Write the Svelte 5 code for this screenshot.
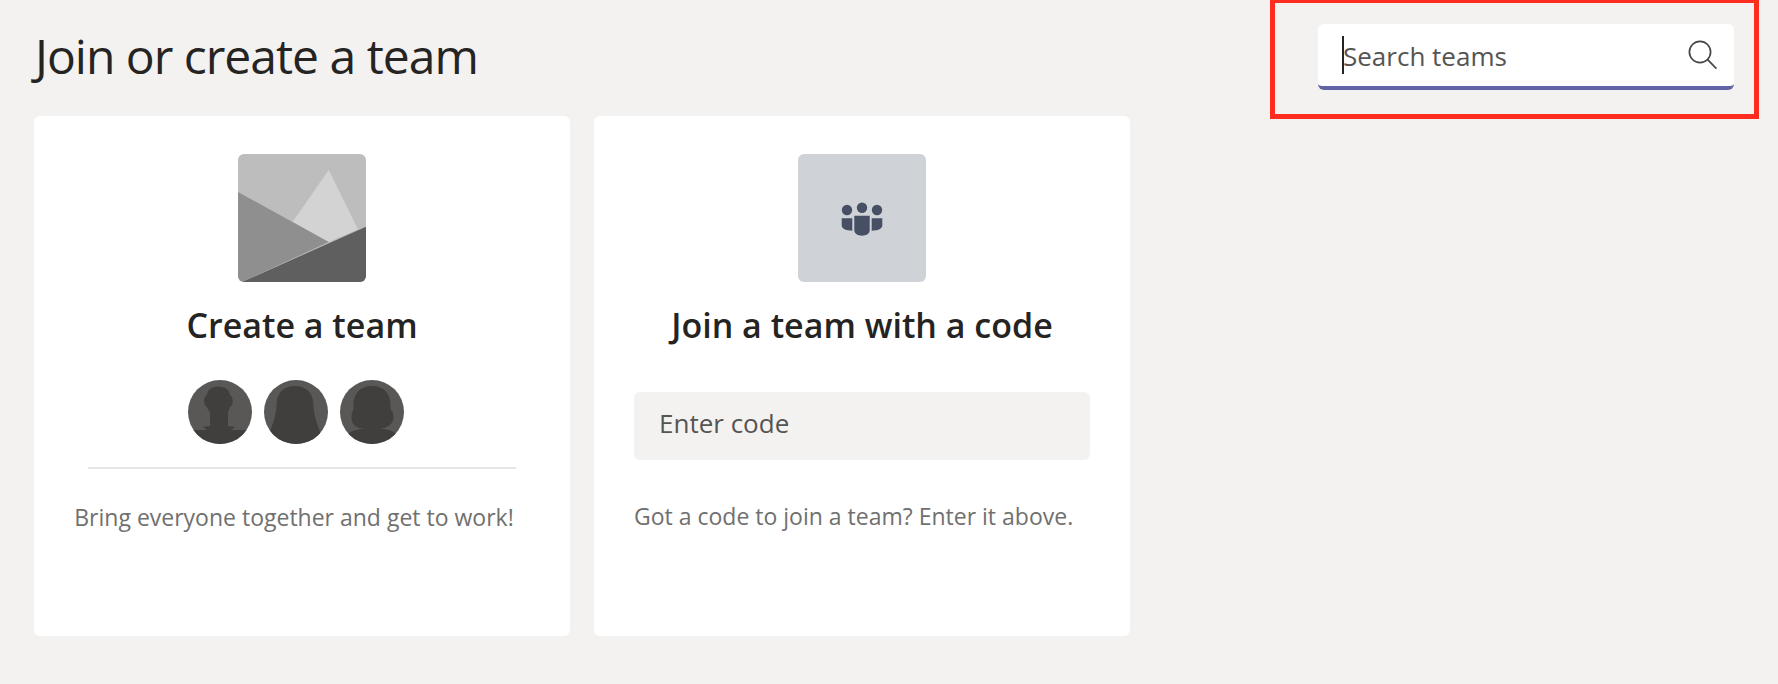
<script>
const cards = { create: "Create a team", join: "Join a team with a code" };
</script>

<div class="page">
  <header class="top">
    <h1>Join or create a team</h1>
    <div class="search-zone">
      <div class="search">
        <i class="caret"></i>
        <span class="placeholder">Search teams</span>
        <svg class="search-icon" width="30" height="32" viewBox="0 0 30 32" fill="none" stroke="#484644" stroke-width="1.7">
          <circle cx="12" cy="12" r="10.6" />
          <path d="M19.4 19.4 L28.4 28.6" />
        </svg>
      </div>
    </div>
  </header>

  <main class="cards">
    <section class="card">
      <svg class="tile" width="128" height="128" viewBox="0 0 128 128">
        <rect width="128" height="128" fill="#bdbdbd" />
        <path d="M90.7 16 L120 75.3 L90.7 88 L54.7 67.7 Z" fill="#d3d3d3" />
        <path d="M0 38 L90.7 88 L4 128 L0 128 Z" fill="#8f8f8f" />
        <path d="M128 72.7 L128 128 L4 128 Z" fill="#5f5f5f" />
      </svg>
      <h2>{cards.create}</h2>
      <div class="avatars">
        <svg width="64" height="64" viewBox="0 0 64 64">
          <rect width="64" height="64" fill="#595856" />
          <path d="M30.5 6.5 C37.5 6.5 41.5 10 42 15 C45.5 17 46 25 42 27 C41.5 29 40.5 31 40 32 L40 46 L47 47 L43 50 L64 50 L64 64 L0 64 L0 50 L19 50 L15 47 L22 46 L22 32 C21 31 19.5 29 19 27 C15 25 15 17 19 15 C19.5 10 23.5 6.5 30.5 6.5 Z" fill="#403f3d" />
        </svg>
        <svg width="64" height="64" viewBox="0 0 64 64">
          <rect width="64" height="64" fill="#595856" />
          <path d="M31 6 C42 6 49 13 49.3 23 C49.5 34 53 44 57 54 L57 64 L5 64 L5 54 C9 44 12.5 34 12.7 23 C13 13 20 6 31 6 Z" fill="#403f3d" />
        </svg>
        <svg width="64" height="64" viewBox="0 0 64 64">
          <rect width="64" height="64" fill="#595856" />
          <path d="M32 6 C44 6 50.5 14 50.5 24 C50.5 28 50.5 29 51 30 C54.5 33 54.5 41 50 45 C46.5 48 42 48.5 39 48.5 C46 49 52 50 56 54 L56 64 L8 64 L8 54 C12 50 19 49 25 48.5 C22 48.5 17 48 14 45 C10.5 41 11 33 13.5 30 C13.5 28 13.5 27 13.5 24 C13.5 14 20 6 32 6 Z" fill="#403f3d" />
        </svg>
      </div>
      <hr />
      <p class="hint shifted">Bring everyone together and get to work!</p>
    </section>

    <section class="card">
      <svg class="tile" width="128" height="128" viewBox="0 0 128 128">
        <rect width="128" height="128" fill="#cfd2d6" />
        <g fill="#464f63">
          <circle cx="49" cy="56" r="5.2" />
          <circle cx="64" cy="53.7" r="5.2" />
          <circle cx="79" cy="56" r="5.2" />
          <path d="M43.7 64.3 H54.3 V76.7 C48 76.7 43.7 75 43.7 71 Z" />
          <path d="M73.7 64.3 H84.3 V71 C84.3 75 80 76.7 73.7 76.7 Z" />
          <path d="M56.3 61.7 H71.7 V76 C71.7 80 68 81.7 64 81.7 C60 81.7 56.3 80 56.3 76 Z" />
        </g>
      </svg>
      <h2>{cards.join}</h2>
      <div class="code-input">Enter code</div>
      <p class="hint left">Got a code to join a team? Enter it above.</p>
    </section>
  </main>
</div>

<style>
:global(body) {
  margin: 0;
  background: #f3f2f1;
}

.page {
  height: 684px;
  font-family: "Open Sans", sans-serif;
  color: #252423;
  overflow: hidden;
}

.top {
  display: flex;
  justify-content: space-between;
  height: 119px;
  padding: 0 19px 0 35px;
  margin-bottom: -3px;
}

h1 {
  margin: 26px 0 0;
  font-size: 48px;
  line-height: 60px;
  font-weight: 400;
  letter-spacing: -1px;
}

.search-zone {
  box-sizing: border-box;
  width: 489px;
  height: 119px;
  border: solid #ff2d20;
  border-width: 3px 5px 5px;
  padding: 21px 20px 0 43px;
}

.search {
  box-sizing: border-box;
  display: flex;
  align-items: center;
  height: 66px;
  padding: 0 16px 0 24px;
  background: #fff;
  border-bottom: 4px solid #6264a7;
  border-radius: 6px;
}

.caret {
  width: 2px;
  height: 38px;
  margin-right: -1px;
  background: #252423;
}

.placeholder {
  flex: 1;
  margin-top: 2px;
  font-size: 26px;
  color: #565452;
}

.search-icon {
  margin-top: 2px;
}

.cards {
  display: flex;
  gap: 24px;
  padding-left: 34px;
}

.card {
  box-sizing: border-box;
  display: flex;
  flex-direction: column;
  align-items: center;
  width: 536px;
  height: 520px;
  padding-top: 38px;
  background: #fff;
  border-radius: 6px;
}

.tile {
  display: block;
  flex: none;
  border-radius: 6px;
}

h2 {
  margin: 21px 0 0;
  font-size: 34px;
  line-height: 44px;
  font-weight: 600;
}

.avatars {
  display: flex;
  gap: 12px;
  margin-top: 33px;
  padding-right: 12px;
}

.avatars svg {
  display: block;
  border-radius: 50%;
}

hr {
  box-sizing: border-box;
  width: 428px;
  height: 2px;
  margin: 23px 0 0;
  border: 0;
  background: #e6e6e6;
}

.hint {
  margin: 32px 0 0;
  font-size: 23px;
  line-height: 32px;
  color: #70706f;
}

.hint.shifted {
  margin-right: 16px;
}

.hint.left {
  align-self: flex-start;
  margin: 40px 0 0 40px;
}

.code-input {
  box-sizing: border-box;
  width: 456px;
  height: 68px;
  margin-top: 45px;
  padding-left: 25px;
  font-size: 26px;
  line-height: 62px;
  color: #565452;
  background: #f3f2f1;
  border-radius: 6px;
}
</style>
